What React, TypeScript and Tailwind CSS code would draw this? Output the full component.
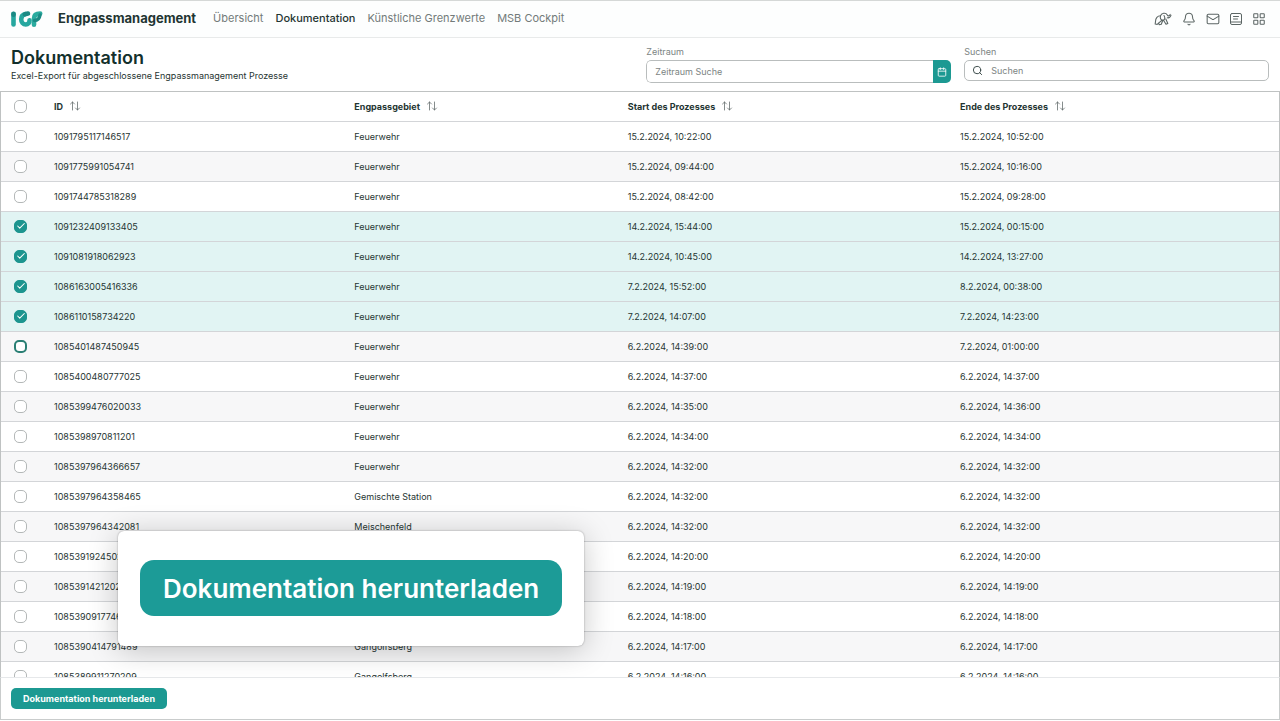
import { useState } from 'react'
import { ArrowUpDown, Bell, Calendar, Check, LayoutGrid, Mail, Search } from 'lucide-react'

const rows = [
  { id: '1091795117146517', area: 'Feuerwehr', start: '15.2.2024, 10:22:00', end: '15.2.2024, 10:52:00' },
  { id: '1091775991054741', area: 'Feuerwehr', start: '15.2.2024, 09:44:00', end: '15.2.2024, 10:16:00' },
  { id: '1091744785318289', area: 'Feuerwehr', start: '15.2.2024, 08:42:00', end: '15.2.2024, 09:28:00' },
  { id: '1091232409133405', area: 'Feuerwehr', start: '14.2.2024, 15:44:00', end: '15.2.2024, 00:15:00' },
  { id: '1091081918062923', area: 'Feuerwehr', start: '14.2.2024, 10:45:00', end: '14.2.2024, 13:27:00' },
  { id: '1086163005416336', area: 'Feuerwehr', start: '7.2.2024, 15:52:00', end: '8.2.2024, 00:38:00' },
  { id: '1086110158734220', area: 'Feuerwehr', start: '7.2.2024, 14:07:00', end: '7.2.2024, 14:23:00' },
  { id: '1085401487450945', area: 'Feuerwehr', start: '6.2.2024, 14:39:00', end: '7.2.2024, 01:00:00' },
  { id: '1085400480777025', area: 'Feuerwehr', start: '6.2.2024, 14:37:00', end: '6.2.2024, 14:37:00' },
  { id: '1085399476020033', area: 'Feuerwehr', start: '6.2.2024, 14:35:00', end: '6.2.2024, 14:36:00' },
  { id: '1085398970811201', area: 'Feuerwehr', start: '6.2.2024, 14:34:00', end: '6.2.2024, 14:34:00' },
  { id: '1085397964366657', area: 'Feuerwehr', start: '6.2.2024, 14:32:00', end: '6.2.2024, 14:32:00' },
  { id: '1085397964358465', area: 'Gemischte Station', start: '6.2.2024, 14:32:00', end: '6.2.2024, 14:32:00' },
  { id: '1085397964342081', area: 'Meischenfeld', start: '6.2.2024, 14:32:00', end: '6.2.2024, 14:32:00' },
  { id: '1085391924502337', area: 'Meischenfeld', start: '6.2.2024, 14:20:00', end: '6.2.2024, 14:20:00' },
  { id: '1085391421202433', area: 'Gangolfsberg', start: '6.2.2024, 14:19:00', end: '6.2.2024, 14:19:00' },
  { id: '1085390917746689', area: 'Gangolfsberg', start: '6.2.2024, 14:18:00', end: '6.2.2024, 14:18:00' },
  { id: '1085390414791489', area: 'Gangolfsberg', start: '6.2.2024, 14:17:00', end: '6.2.2024, 14:17:00' },
  { id: '1085389911270209', area: 'Gangolfsberg', start: '6.2.2024, 14:16:00', end: '6.2.2024, 14:16:00' },
]

const navItems = ['Übersicht', 'Dokumentation', 'Künstliche Grenzwerte', 'MSB Cockpit']

const columns = [
  { label: 'ID', width: 'w-[23.5%]' },
  { label: 'Engpassgebiet', width: 'w-[21.4%]' },
  { label: 'Start des Prozesses', width: 'w-[26%]' },
  { label: 'Ende des Prozesses', width: '' },
]

const focusedId = '1085401487450945'

function Logo() {
  return (
    <svg viewBox="0 0 32 18" className="h-[18px] w-8" fill="none" strokeLinecap="round" strokeLinejoin="round" strokeWidth="4.6">
      <path d="M2.500 4v10.500" stroke="#27a79f" />
      <path d="M2.500 3.800v1" stroke="#1b8a84" />
      <path d="M14.500 4c-2.500.5-4.300 2.500-4.300 5.200 0 3 2 5.300 4.600 5.300 2.300 0 3.900-1.700 3.700-4.300" stroke="#27a79f" />
      <path d="M13.800 4.200 17 3.600" stroke="#1b8a84" />
      <path d="M23 14.800V8.500c0-3 2-4.900 6.200-4.900" stroke="#2bab9f" />
      <path d="M23.500 10.500c2.700 0 5-1.800 5.500-5.500" stroke="#1b8a84" strokeWidth="3.4" />
    </svg>
  )
}

function ElephantIcon() {
  return (
    <svg viewBox="0 0 18 14" className="h-[14px] w-[18px]" fill="none" stroke="currentColor" strokeWidth="1.1" strokeLinecap="round" strokeLinejoin="round">
      <path d="M1.500 9.500C1.500 6 3.500 3.800 6.500 3.800c.8-2.800 5.300-3.600 6.800-.8.6 1.300 2.200 1.200 2.900-.6" />
      <path d="M6.500 3.800C5.800 6.300 7 8.600 9 8.300c2-.3 2.300-2.800 1-4.800" />
      <path d="M13.300 5.800c1.800.3 3.200-.8 3.700-2.600" />
      <path d="M1.500 9.500 1.200 12l2 .4L8 8.200M4.500 11l.8 1.700 2-.4 1.500-4M9.500 8.300l2.500 4 1.800-.8-2-4.500" />
    </svg>
  )
}

function JournalIcon() {
  return (
    <svg viewBox="0 0 12 12" className="size-3" fill="none" stroke="currentColor" strokeWidth="1" strokeLinecap="round" strokeLinejoin="round">
      <rect x="0.5" y="0.5" width="11" height="11" rx="1.5" />
      <path d="M0.500 9h11M3.500 3.500h5M3.500 6h4" />
    </svg>
  )
}

function RowCheckbox({ label, checked, focused, onChange }: { label: string; checked: boolean; focused?: boolean; onChange: () => void }) {
  return (
    <span className="ml-[13px] grid size-[13px] place-items-center">
      <input
        type="checkbox"
        aria-label={label}
        checked={checked}
        onChange={onChange}
        className={`col-start-1 row-start-1 size-[13px] appearance-none rounded-[5px] bg-white checked:border-[#1c958f] checked:bg-[#1c958f] ${
          focused ? 'border-2 border-[#2a7f74]' : 'border border-[#b4b8b8]'
        }`}
      />
      {checked && <Check className="pointer-events-none col-start-1 row-start-1 size-[10px] text-white" strokeWidth={2.5} />}
    </span>
  )
}

export default function App() {
  const [selected, setSelected] = useState(rows.slice(3, 7).map((row) => row.id))

  const toggle = (id: string) =>
    setSelected((prev) => (prev.includes(id) ? prev.filter((item) => item !== id) : [...prev, id]))

  const toggleAll = () => setSelected((prev) => (prev.length === rows.length ? [] : rows.map((row) => row.id)))

  return (
    <div className="relative flex h-screen flex-col bg-white pb-px font-['Inter',sans-serif] text-[#1f3532]">
      {/* Top navigation */}
      <header className="flex h-[38px] shrink-0 items-center border-t border-b border-t-[#d5d8d7] border-b-[#e8eaea] bg-[#fdfefe] pr-[14px] pb-px pl-[11px]">
        <Logo />
        <span className="ml-[15px] text-[13px] font-bold">Engpassmanagement</span>
        <nav className="ml-[17px] flex gap-3 text-[11px]">
          {navItems.map((item) => (
            <a key={item} href="#" className={item === 'Dokumentation' ? 'font-medium' : 'text-[#737b7a]'}>
              {item}
            </a>
          ))}
        </nav>
        <div className="ml-auto flex items-center gap-[10px] text-[#5c6665]">
          <button aria-label="Assistent"><ElephantIcon /></button>
          <button aria-label="Benachrichtigungen"><Bell className="size-[14px]" strokeWidth={1.8} /></button>
          <button aria-label="Nachrichten"><Mail className="size-[14px]" strokeWidth={1.8} /></button>
          <button aria-label="Journal"><JournalIcon /></button>
          <button aria-label="Apps"><LayoutGrid className="size-[14px]" strokeWidth={1.8} /></button>
        </div>
      </header>

      {/* Title and filters */}
      <section className="flex h-[53px] shrink-0 px-[11px]">
        <div className="flex-1 pt-2">
          <h1 className="text-[18px] leading-[23px] font-semibold text-[#12302c]">Dokumentation</h1>
          <p className="text-[9px] leading-[14px]">Excel-Export für abgeschlossene Engpassmanagement Prozesse</p>
        </div>
        <div className="flex w-[49.5%] gap-[13px] pt-2 text-[9px] text-[#7c8483]">
          <div className="flex-1">
            <label htmlFor="zeitraum" className="mb-[2px] block leading-[12px]">Zeitraum</label>
            <div className="flex h-[23px] overflow-hidden rounded-[5px]">
              <input
                id="zeitraum"
                placeholder="Zeitraum Suche"
                className="min-w-0 flex-1 rounded-l-[5px] border border-r-0 border-[#b9bdbd] px-2 placeholder:text-[#7c8483]"
              />
              <button aria-label="Kalender öffnen" className="grid w-[18px] place-items-center bg-[#1c9992] text-white">
                <Calendar className="size-[10px]" />
              </button>
            </div>
          </div>
          <div className="flex-1">
            <label htmlFor="suchen" className="mb-[2px] block leading-[12px]">Suchen</label>
            <div className="flex h-[21px] items-center gap-2 rounded-[5px] border border-[#b9bdbd] px-[7px]">
              <Search className="size-[11px] text-[#2f403e]" />
              <input id="suchen" placeholder="Suchen" className="min-w-0 flex-1 placeholder:text-[#7c8483]" />
            </div>
          </div>
        </div>
      </section>

      {/* Table */}
      <main className="min-h-0 flex-1 overflow-hidden border border-b-0 border-[#bfc2c2]">
        <table className="w-full table-fixed text-left text-[9px]">
          <thead>
            <tr className="h-[29px] border-b border-[#d3d5d8]">
              <th className="w-[43px]">
                <RowCheckbox label="Alle auswählen" checked={selected.length === rows.length} onChange={toggleAll} />
              </th>
              {columns.map((column) => (
                <th key={column.label} className={`${column.width} pl-[10px] font-bold`}>
                  <button className="flex items-center gap-[6px]">
                    {column.label}
                    <ArrowUpDown className="size-3 text-[#5c6665]" strokeWidth={1.5} />
                  </button>
                </th>
              ))}
            </tr>
          </thead>
          <tbody>
            {rows.map((row) => {
              const checked = selected.includes(row.id)
              return (
                <tr
                  key={row.id}
                  className={`h-[30px] border-b border-[#d3d5d8] ${checked ? 'bg-[#e1f4f3]' : 'even:bg-[#f7f7f8]'}`}
                >
                  <td>
                    <RowCheckbox
                      label={`Prozess ${row.id} auswählen`}
                      checked={checked}
                      focused={row.id === focusedId}
                      onChange={() => toggle(row.id)}
                    />
                  </td>
                  <td className="pt-[2px] pl-[10px]">{row.id}</td>
                  <td className="pt-[2px] pl-[10px]">{row.area}</td>
                  <td className="pt-[2px] pl-[10px]">{row.start}</td>
                  <td className="pt-[2px] pl-[10px]">{row.end}</td>
                </tr>
              )
            })}
          </tbody>
        </table>
      </main>

      <footer className="flex h-[43px] shrink-0 items-center border border-[#c9cccc] border-t-[#e6e8ea] px-[10px]">
        <button className="h-[21px] rounded-[5px] bg-[#1c9992] px-3 text-[9px] font-bold text-white">
          Dokumentation herunterladen
        </button>
      </footer>

      {/* Enlarged download action */}
      <div className="absolute bottom-[75px] left-[118px] rounded-[6px] bg-white px-[22px] pt-[29px] pb-[30px] shadow-[0_4px_30px_rgba(0,0,0,0.22),0_0_2px_rgba(0,0,0,0.35)]">
        <button className="h-14 rounded-[14px] bg-[#1c9b97] px-[23px] text-[26px] font-semibold text-white">
          Dokumentation herunterladen
        </button>
      </div>
    </div>
  )
}
